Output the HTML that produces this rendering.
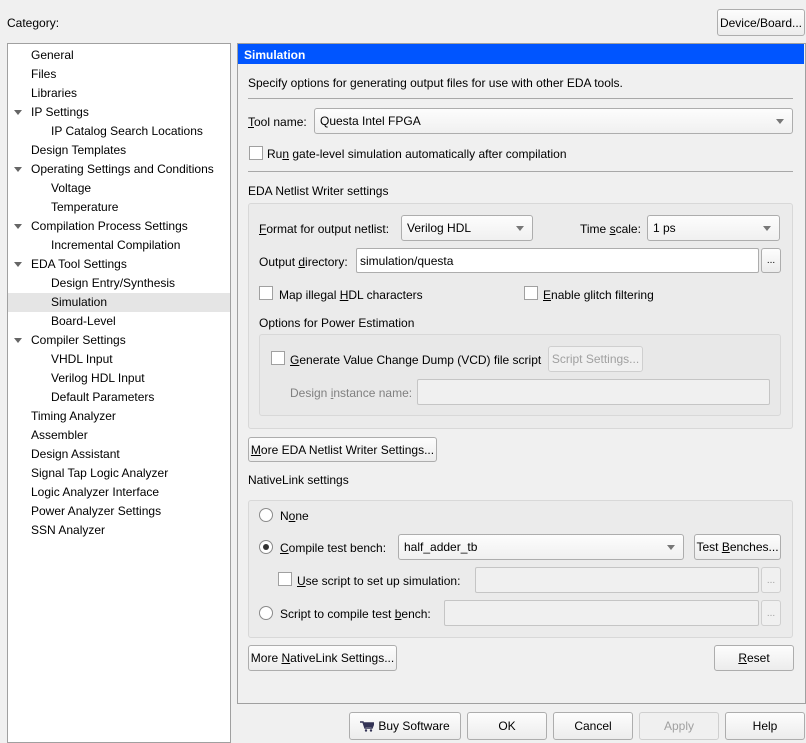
<!DOCTYPE html>
<html><head><style>
*{box-sizing:border-box;margin:0;padding:0}
body{width:806px;height:740px;background:#f0f0f0;font-family:"Liberation Sans","DejaVu Sans",sans-serif;font-size:12px;color:#000;position:relative;overflow:hidden}
.a{position:absolute;white-space:nowrap}
.btn{position:absolute;border:1px solid #adadad;border-radius:3px;background:linear-gradient(#fdfdfd,#ececec);text-align:center;display:flex;align-items:center;justify-content:center}
.dis{color:#a0a0a0;border-color:#cfcfcf;background:#f0f0f0}
.combo{position:absolute;border:1px solid #adadad;border-radius:3px;background:linear-gradient(#fdfdfd,#f0f0f0);padding-left:5px;display:flex;align-items:center}
.combo:after{content:"";position:absolute;right:8px;top:50%;margin-top:-2px;border-left:4px solid transparent;border-right:4px solid transparent;border-top:5px solid #777}
.inp{position:absolute;border:1px solid #adadad;border-radius:2px;background:#fff;padding-left:3px;display:flex;align-items:center}
.inp.d{background:#f0f0f0;border-color:#c5c5c5}
.cb{position:absolute;width:14px;height:14px;border:1px solid #a0a0a0;background:#fff}
.rb{position:absolute;width:14px;height:14px;border:1px solid #8a8a8a;border-radius:50%;background:#fff}
.grp{position:absolute;border:1px solid #d8d8d8;border-radius:3px;background:#ebebeb}
.tree div{position:absolute;left:0;height:19px;line-height:19px;white-space:nowrap}
.tri{position:absolute;left:6px;top:7px;border-left:4px solid transparent;border-right:4px solid transparent;border-top:5px solid #666}
u{text-decoration:underline}
</style></head><body>
<div class="a" style="left:7px;top:16px">Category:</div>
<div class="btn" style="left:717px;top:9px;width:88px;height:27px">Device/Board...</div>

<div class="a tree" style="left:7px;top:43px;width:224px;height:700px;background:#fff;border:1px solid #a0a0a0">
<div style="top:2px;left:23px">General</div>
<div style="top:21px;left:23px">Files</div>
<div style="top:40px;left:23px">Libraries</div>
<div style="top:59px;width:220px"><span class="tri"></span><span style="margin-left:23px">IP Settings</span></div>
<div style="top:78px;left:43px">IP Catalog Search Locations</div>
<div style="top:97px;left:23px">Design Templates</div>
<div style="top:116px;width:220px"><span class="tri"></span><span style="margin-left:23px">Operating Settings and Conditions</span></div>
<div style="top:135px;left:43px">Voltage</div>
<div style="top:154px;left:43px">Temperature</div>
<div style="top:173px;width:220px"><span class="tri"></span><span style="margin-left:23px">Compilation Process Settings</span></div>
<div style="top:192px;left:43px">Incremental Compilation</div>
<div style="top:211px;width:220px"><span class="tri"></span><span style="margin-left:23px">EDA Tool Settings</span></div>
<div style="top:230px;left:43px">Design Entry/Synthesis</div>
<div style="top:249px;width:222px;background:#e5e5e5"><span style="margin-left:43px">Simulation</span></div>
<div style="top:268px;left:43px">Board-Level</div>
<div style="top:287px;width:220px"><span class="tri"></span><span style="margin-left:23px">Compiler Settings</span></div>
<div style="top:306px;left:43px">VHDL Input</div>
<div style="top:325px;left:43px">Verilog HDL Input</div>
<div style="top:344px;left:43px">Default Parameters</div>
<div style="top:363px;left:23px">Timing Analyzer</div>
<div style="top:382px;left:23px">Assembler</div>
<div style="top:401px;left:23px">Design Assistant</div>
<div style="top:420px;left:23px">Signal Tap Logic Analyzer</div>
<div style="top:439px;left:23px">Logic Analyzer Interface</div>
<div style="top:458px;left:23px">Power Analyzer Settings</div>
<div style="top:477px;left:23px">SSN Analyzer</div>
</div>

<div class="a" style="left:237px;top:43px;width:569px;height:661px;border:1px solid #a0a0a0"></div>
<div class="a" style="left:238px;top:44px;width:566px;height:20px;background:#0055ff;color:#fff;font-weight:bold;padding-left:6px;line-height:22px">Simulation</div>
<div class="a" style="left:248px;top:76px">Specify options for generating output files for use with other EDA tools.</div>
<div class="a" style="left:248px;top:98px;width:545px;height:1px;background:#a8a8a8"></div>
<div class="a" style="left:248px;top:115px"><u>T</u>ool name:</div>
<div class="combo" style="left:314px;top:108px;width:479px;height:26px">Questa Intel FPGA</div>
<div class="cb" style="left:249px;top:146px"></div>
<div class="a" style="left:267px;top:147px">Ru<u>n</u> gate-level simulation automatically after compilation</div>
<div class="a" style="left:248px;top:171px;width:545px;height:1px;background:#a8a8a8"></div>
<div class="a" style="left:248px;top:184px">EDA Netlist Writer settings</div>

<div class="grp" style="left:248px;top:203px;width:545px;height:226px"></div>
<div class="a" style="left:259px;top:222px"><u>F</u>ormat for output netlist:</div>
<div class="combo" style="left:401px;top:215px;width:132px;height:26px">Verilog HDL</div>
<div class="a" style="left:580px;top:222px">Time <u>s</u>cale:</div>
<div class="combo" style="left:647px;top:215px;width:133px;height:26px">1 ps</div>
<div class="a" style="left:259px;top:255px">Output <u>d</u>irectory:</div>
<div class="inp" style="left:356px;top:248px;width:403px;height:25px">simulation/questa</div>
<div class="btn" style="left:761px;top:248px;width:20px;height:25px;font-size:10px">...</div>
<div class="cb" style="left:259px;top:286px"></div>
<div class="a" style="left:279px;top:288px">Map illegal <u>H</u>DL characters</div>
<div class="cb" style="left:524px;top:286px"></div>
<div class="a" style="left:543px;top:288px"><u>E</u>nable glitch filtering</div>
<div class="a" style="left:259px;top:316px">Options for Power Estimation</div>
<div class="grp" style="left:259px;top:334px;width:522px;height:82px;background:#e8e8e8"></div>
<div class="cb" style="left:271px;top:351px"></div>
<div class="a" style="left:290px;top:353px"><u>G</u>enerate Value Change Dump (VCD) file script</div>
<div class="btn dis" style="left:548px;top:346px;width:95px;height:26px">Script Settings...</div>
<div class="a" style="left:290px;top:386px;color:#808080">Design <u>i</u>nstance name:</div>
<div class="inp d" style="left:417px;top:379px;width:353px;height:26px"></div>
<div class="btn" style="left:248px;top:437px;width:189px;height:25px"><span><u>M</u>ore EDA Netlist Writer Settings...</span></div>

<div class="a" style="left:248px;top:473px">NativeLink settings</div>
<div class="grp" style="left:248px;top:500px;width:545px;height:138px"></div>
<div class="rb" style="left:259px;top:508px"></div>
<div class="a" style="left:280px;top:509px">N<u>o</u>ne</div>
<div class="rb" style="left:259px;top:540px"><div style="position:absolute;left:3px;top:3px;width:6px;height:6px;border-radius:50%;background:#333"></div></div>
<div class="a" style="left:280px;top:541px"><u>C</u>ompile test bench:</div>
<div class="combo" style="left:398px;top:534px;width:286px;height:26px">half_adder_tb</div>
<div class="btn" style="left:694px;top:534px;width:87px;height:26px"><span>Test <u>B</u>enches...</span></div>
<div class="cb" style="left:278px;top:572px"></div>
<div class="a" style="left:297px;top:574px"><u>U</u>se script to set up simulation:</div>
<div class="inp d" style="left:475px;top:567px;width:284px;height:26px"></div>
<div class="btn dis" style="left:761px;top:567px;width:20px;height:26px;font-size:10px">...</div>
<div class="rb" style="left:259px;top:606px"></div>
<div class="a" style="left:280px;top:607px">Script to compile test <u>b</u>ench:</div>
<div class="inp d" style="left:444px;top:600px;width:315px;height:26px"></div>
<div class="btn dis" style="left:761px;top:600px;width:20px;height:26px;font-size:10px">...</div>
<div class="btn" style="left:248px;top:645px;width:149px;height:26px"><span>More <u>N</u>ativeLink Settings...</span></div>
<div class="btn" style="left:714px;top:645px;width:80px;height:26px"><span><u>R</u>eset</span></div>

<div class="btn" style="left:349px;top:712px;width:112px;height:28px"><svg width="14" height="11" viewBox="0 0 14 11" style="margin-right:4px"><path d="M0 1h3l2 6h7l2-5H4" fill="none" stroke="#335" stroke-width="1.5"/><rect x="4" y="2" width="9" height="4" fill="#335"/><circle cx="6" cy="9.5" r="1.2" fill="#335"/><circle cx="11" cy="9.5" r="1.2" fill="#335"/></svg>Buy Software</div>
<div class="btn" style="left:467px;top:712px;width:80px;height:28px">OK</div>
<div class="btn" style="left:553px;top:712px;width:80px;height:28px">Cancel</div>
<div class="btn dis" style="left:639px;top:712px;width:80px;height:28px">Apply</div>
<div class="btn" style="left:725px;top:712px;width:80px;height:28px">Help</div>
</body></html>
